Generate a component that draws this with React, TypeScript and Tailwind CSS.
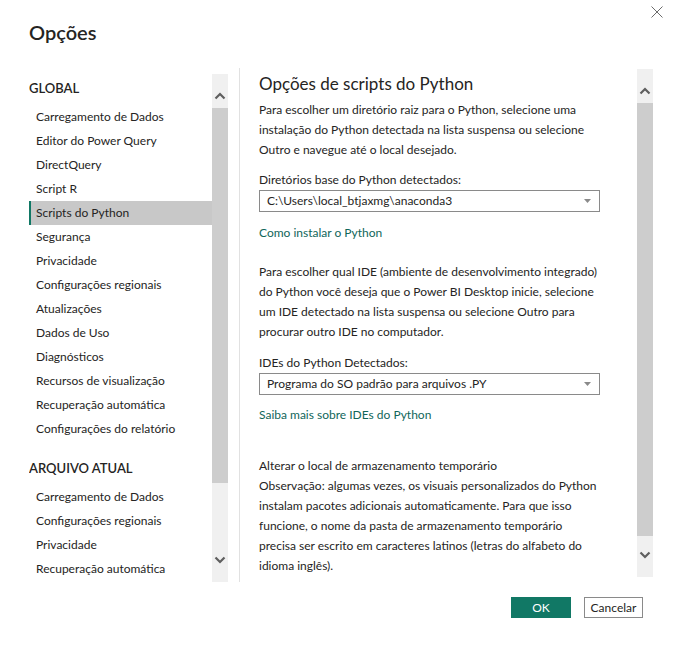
import React from "react";

const font = { fontFamily: '"Segoe UI", "Lato", "Liberation Sans", sans-serif' };

const globalItems = [
  "Carregamento de Dados",
  "Editor do Power Query",
  "DirectQuery",
  "Script R",
  "Scripts do Python",
  "Segurança",
  "Privacidade",
  "Configurações regionais",
  "Atualizações",
  "Dados de Uso",
  "Diagnósticos",
  "Recursos de visualização",
  "Recuperação automática",
  "Configurações do relatório",
];

const fileItems = [
  "Carregamento de Dados",
  "Configurações regionais",
  "Privacidade",
  "Recuperação automática",
];

function Chevron({ up }: { up?: boolean }) {
  return (
    <svg width="12" height="8" viewBox="0 0 12 8">
      <polyline
        points={up ? "1.5,6.5 6,2 10.5,6.5" : "1.5,1.5 6,6 10.5,1.5"}
        fill="none"
        stroke="#5f5f5f"
        strokeWidth="2.2"
      />
    </svg>
  );
}

function ScrollBar({ thumbTop, thumbHeight }: { thumbTop: number; thumbHeight: number }) {
  return (
    <div className="w-[16px] h-[508px] bg-[#f0f0f0] relative flex flex-col items-center justify-between py-[18px]">
      <Chevron up />
      <div
        className="absolute left-0 w-[16px] bg-[#cdcdcd]"
        style={{ top: thumbTop, height: thumbHeight }}
      />
      <Chevron />
    </div>
  );
}

function Select({ value }: { value: string }) {
  return (
    <div className="w-[341px] h-[22px] border border-[#8a8a8a] flex items-center justify-between pl-[7px] pr-[8px]">
      <span>{value}</span>
      <svg width="7" height="4" viewBox="0 0 7 4">
        <polygon points="0,0 7,0 3.5,4" fill="#8a8a8a" />
      </svg>
    </div>
  );
}

export default function App() {
  return (
    <div
      className="w-[674px] h-[646px] bg-white relative text-[12px] text-[#252423] overflow-hidden"
      style={font}
    >
      {/* fechar */}
      <svg className="absolute left-[651px] top-[6px]" width="12" height="12" viewBox="0 0 12 12">
        <path d="M0.5 0.5 L11.5 11.5 M11.5 0.5 L0.5 11.5" stroke="#6b6b6b" strokeWidth="1" />
      </svg>

      <div className="h-[68px] pl-[29px] pt-[18px]">
        <h1 className="text-[20px] leading-[28px] font-semibold">Opções</h1>
      </div>

      <div className="flex items-start">
        {/* lateral */}
        <div className="ml-[29px] mt-[6px] flex h-[508px]">
          <div className="w-[183px] h-[508px] overflow-hidden">
            <div className="h-[28px] leading-[28px] font-semibold text-[13px] mb-[3px]">GLOBAL</div>
            {globalItems.map((item) => (
              <div
                key={item}
                className={
                  item === "Scripts do Python"
                    ? "h-[24px] leading-[24px] pl-[5px] border-l-[2px] border-[#117865] bg-[#c8c8c8]"
                    : "h-[24px] leading-[24px] pl-[7px]"
                }
              >
                {item}
              </div>
            ))}
            <div className="pt-[13px] h-[41px] leading-[28px] font-semibold text-[13px] mb-[3px]">
              ARQUIVO ATUAL
            </div>
            {fileItems.map((item) => (
              <div key={item} className="h-[24px] leading-[24px] pl-[7px]">
                {item}
              </div>
            ))}
          </div>
          <ScrollBar thumbTop={34} thumbHeight={375} />
        </div>

        <div className="ml-[11px] w-px h-[514px] bg-[#e1e1e1]" />

        {/* conteúdo */}
        <div className="ml-[19px] w-[378px] pt-[4px] leading-[20px]">
          <h2 className="text-[17px] leading-[24px]">Opções de scripts do Python</h2>
          <p className="mt-[4px]">
            Para escolher um diretório raiz para o Python, selecione uma
            <br />
            instalação do Python detectada na lista suspensa ou selecione
            <br />
            Outro e navegue até o local desejado.
          </p>
          <div className="mt-[10px]">Diretórios base do Python detectados:</div>
          <Select value="C:\Users\local_btjaxmg\anaconda3" />
          <div className="mt-[11px] text-[#10665a]">Como instalar o Python</div>
          <p className="mt-[19px]">
            Para escolher qual IDE (ambiente de desenvolvimento integrado)
            <br />
            do Python você deseja que o Power BI Desktop inicie, selecione
            <br />
            um IDE detectado na lista suspensa ou selecione Outro para
            <br />
            procurar outro IDE no computador.
          </p>
          <div className="mt-[11px]">IDEs do Python Detectados:</div>
          <Select value="Programa do SO padrão para arquivos .PY" />
          <div className="mt-[10px] text-[#10665a]">Saiba mais sobre IDEs do Python</div>
          <div className="mt-[31px]">Alterar o local de armazenamento temporário</div>
          <p>
            Observação: algumas vezes, os visuais personalizados do Python
            <br />
            instalam pacotes adicionais automaticamente. Para que isso
            <br />
            funcione, o nome da pasta de armazenamento temporário
            <br />
            precisa ser escrito em caracteres latinos (letras do alfabeto do
            <br />
            idioma inglês).
          </p>
        </div>

        <div className="mt-[1px]">
          <ScrollBar thumbTop={34} thumbHeight={433} />
        </div>
      </div>

      {/* botões */}
      <div className="flex justify-end gap-[13px] pr-[31px] mt-[15px]">
        <button className="w-[60px] h-[21px] bg-[#117865] text-white text-[12px] leading-[21px]">
          OK
        </button>
        <button className="w-[59px] h-[21px] border border-[#8a8a8a] text-[12px] leading-[19px]">
          Cancelar
        </button>
      </div>
    </div>
  );
}
